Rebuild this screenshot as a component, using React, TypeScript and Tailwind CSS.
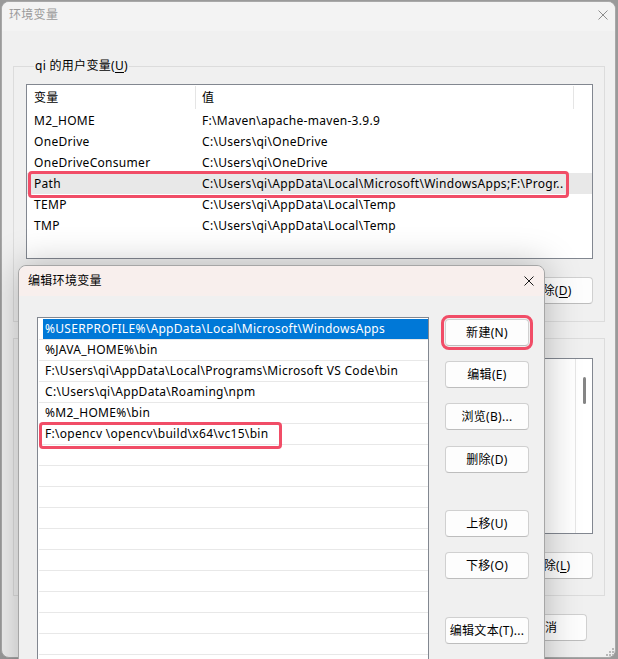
import React from 'react';

const FONT = "font-['Noto_Sans','Noto_Sans_CJK_SC',sans-serif] tracking-[0.3px]";

const CloseIcon = ({ color }: { color: string }) => (
  <svg width="10" height="10" viewBox="0 0 10 10" fill="none">
    <path d="M0.5 0.5L9.5 9.5M9.5 0.5L0.5 9.5" stroke={color} strokeWidth="1" />
  </svg>
);

const Btn = ({ children, className = '' }: { children?: React.ReactNode; className?: string }) => (
  <div
    className={`flex h-[27px] w-[84px] shrink-0 items-center justify-center rounded-[4px] border border-[#d0d0d0] border-b-[#bdbdbd] bg-[#fdfdfd] text-[12px] leading-[16px] text-black ${className}`}
  >
    {children}
  </div>
);

const Key = ({ k }: { k: string }) => <span className="underline underline-offset-[2px]">{k}</span>;

const userVars = [
  ['M2_HOME', 'F:\\Maven\\apache-maven-3.9.9'],
  ['OneDrive', 'C:\\Users\\qi\\OneDrive'],
  ['OneDriveConsumer', 'C:\\Users\\qi\\OneDrive'],
  ['Path', 'C:\\Users\\qi\\AppData\\Local\\Microsoft\\WindowsApps;F:\\Progr..'],
  ['TEMP', 'C:\\Users\\qi\\AppData\\Local\\Temp'],
  ['TMP', 'C:\\Users\\qi\\AppData\\Local\\Temp'],
];

const paths = [
  '%USERPROFILE%\\AppData\\Local\\Microsoft\\WindowsApps',
  '%JAVA_HOME%\\bin',
  'F:\\Users\\qi\\AppData\\Local\\Programs\\Microsoft VS Code\\bin',
  'C:\\Users\\qi\\AppData\\Roaming\\npm',
  '%M2_HOME%\\bin',
  'F:\\opencv \\opencv\\build\\x64\\vc15\\bin',
  '', '', '', '', '', '', '', '', '', '', '', '',
];

// buttons of the back window that sit fully behind the edit dialog carry no text
const BackWindow = () => (
  <div className="absolute left-[1px] top-[1px] flex h-[657px] w-[615px] flex-col overflow-hidden rounded-[8px] border border-[#a8a8a8] bg-[#f0f0f0]">
    <div className="flex h-[29px] shrink-0 items-center justify-between bg-[#f3f3f3] pb-[3px] pl-[7px] pr-[7px]">
      <span className="text-[12px] leading-[16px] text-[#9a9a9a]">环境变量</span>
      <CloseIcon color="#8c8c8c" />
    </div>
    <div className="flex flex-col pl-[11px] pr-[10px]">
      <fieldset className="mt-[27px] border border-[#dcdcdc] pb-[17px] pl-[12px] pr-[11px] pt-[10px]">
        <legend className="ml-[8px] px-[1px] text-[12px] leading-[16px] text-black">
          qi 的用户变量(<Key k="U" />)
        </legend>
        <div className="h-[175px] border border-[#828790] bg-white text-[12px] leading-[16px] text-black">
          <div className="flex h-[25px] items-center">
            <div className="w-[168px] pl-[7px]">变量</div>
            <div className="h-[23px] w-px bg-[#e5e5e5]" />
            <div className="w-[377px] pl-[6px]">值</div>
            <div className="h-[23px] w-px bg-[#e5e5e5]" />
          </div>
          {userVars.map(([name, value]) => (
            <div
              key={name}
              className={`relative flex h-[21px] items-center ${name === 'Path' ? 'bg-[#e8e8e8]' : ''}`}
            >
              <div className="w-[169px] pl-[7px]">{name}</div>
              <div className="whitespace-nowrap pl-[6px]">{value}</div>
              {name === 'Path' && (
                <div className="absolute left-[1px] top-[-2px] h-[27px] w-[541px] rounded-[4px] border-[3px] border-[#f14d67]" />
              )}
            </div>
          ))}
        </div>
        <div className="mt-[18px] flex justify-end gap-[12px]">
          <Btn />
          <Btn />
          <Btn>
            删除(<Key k="D" />)
          </Btn>
        </div>
      </fieldset>

      <fieldset className="mt-[16px] border border-[#dcdcdc] pb-[16px] pl-[12px] pr-[11px] pt-[19px]">
        <div className="flex h-[176px] border border-[#828790] bg-white">
          <div className="flex-1" />
          <div className="w-[17px] border-l border-[#e6e6e6] bg-white">
            <div className="ml-[7px] mt-[18px] h-[27px] w-[3px] rounded-full bg-[#858585]" />
          </div>
        </div>
        <div className="mt-[18px] flex justify-end gap-[12px]">
          <Btn />
          <Btn />
          <Btn>
            删除(<Key k="L" />)
          </Btn>
        </div>
      </fieldset>

      <div className="mr-[18px] mt-[18px] flex justify-end gap-[8px]">
        <Btn className="w-[80px]" />
        <Btn className="w-[80px]">取消</Btn>
      </div>
    </div>
    <svg className="absolute bottom-[1px] right-[1px]" width="9" height="9" viewBox="0 0 9 9">
      {[
        [7, 1], [4, 4], [7, 4], [1, 7], [4, 7], [7, 7],
      ].map(([x, y]) => (
        <rect key={`${x}-${y}`} x={x} y={y} width="2" height="2" fill="#b8b8b8" />
      ))}
    </svg>
  </div>
);

const EditDialog = () => (
  <div className="absolute left-[18px] top-[265px] flex h-[470px] w-[527px] flex-col rounded-t-[8px] border border-[#a6a6a6] bg-[#f0f0f0] shadow-[0_0_36px_rgba(0,0,0,0.26)]">
    <div className="flex h-[30px] shrink-0 items-center justify-between rounded-t-[8px] bg-[#f8efed] pl-[9px] pr-[10px]">
      <span className="text-[12px] leading-[16px] text-black">编辑环境变量</span>
      <CloseIcon color="#1a1a1a" />
    </div>
    <div className="flex shrink-0 pl-[18px] pt-[21px]">
      <div className="h-[400px] w-[392px] border border-[#828790] bg-white pt-[1px] text-[12px] leading-[16px] text-black">
        {paths.map((p, i) => (
          <div key={i} className="relative ml-[1px] flex h-[21px] items-center border-b border-[#e8e8e8]">
            {i === 0 ? (
              <div className="ml-[4px] flex h-full flex-1 items-center bg-[#0078d7] pl-[2px] text-white">{p}</div>
            ) : (
              <div className="whitespace-nowrap pl-[6px]">{p}</div>
            )}
            {i === 5 && (
              <div className="absolute left-0 top-[-2px] h-[27px] w-[243px] rounded-[4px] border-[3px] border-[#f14d67]" />
            )}
          </div>
        ))}
      </div>
      <div className="ml-[16px] mt-[2px] flex flex-col">
        <Btn className="outline outline-[3px] outline-offset-[1px] outline-[#f14d67]">新建(N)</Btn>
        <Btn className="mt-[15px]">编辑(E)</Btn>
        <Btn className="mt-[15px]">浏览(B)...</Btn>
        <Btn className="mt-[16px]">删除(D)</Btn>
        <Btn className="mt-[37px]">上移(U)</Btn>
        <Btn className="mt-[15px]">下移(O)</Btn>
        <Btn className="mt-[38px]">编辑文本(T)...</Btn>
      </div>
    </div>
  </div>
);

export default function App() {
  return (
    <div className={`relative h-[659px] w-[618px] overflow-hidden bg-[#9a9a9a] ${FONT}`}>
      <BackWindow />
      <EditDialog />
    </div>
  );
}
